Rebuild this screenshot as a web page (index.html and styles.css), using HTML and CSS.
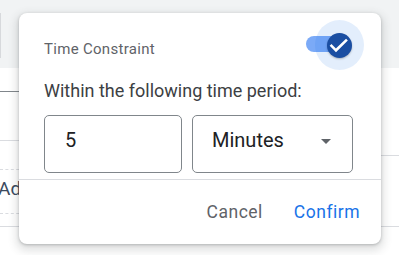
FILE: index.html
```html
<!DOCTYPE html>
<html>
<head>
<meta charset="utf-8">
<link rel="stylesheet" href="styles.css">
</head>
<body>
<div class="page">
  <div class="topband"><div class="edge"></div></div>
  <div class="line line-left line-dark l91"></div>
  <div class="line line-left l140"></div>
  <div class="line line-right l155"></div>
  <div class="line line-left dashed l169"></div>
  <div class="addtext">Add</div>
  <div class="line line-left dashed l213"></div>
  <div class="line line-full l226"></div>
</div>

<div class="dialog">
  <div class="header">
    <div class="title">Time Constraint</div>
    <div class="toggle">
      <div class="track"></div>
      <div class="halo"></div>
      <div class="thumb">
        <svg width="25" height="25" viewBox="0 0 25 25"><path d="M4.5 12.8 L9 17.3 L19 7.5" fill="none" stroke="#fff" stroke-width="2.6" stroke-linecap="square"/></svg>
      </div>
    </div>
  </div>
  <div class="prompt">Within the following time period:</div>
  <div class="fields">
    <div class="field num">5</div>
    <div class="field select"><span>Minutes</span><span class="arrow"></span></div>
  </div>
  <div class="divider"></div>
  <div class="footer">
    <span class="btn cancel">Cancel</span>
    <span class="btn confirm">Confirm</span>
  </div>
</div>
</body>
</html>
```

FILE: styles.css
```css
* { box-sizing: border-box; }
html, body { margin: 0; padding: 0; background: #fff; }
body { font-family: Roboto, "Noto Sans", sans-serif; width: 399px; height: 255px; overflow: hidden; position: relative; }

.page { width: 399px; height: 255px; }
.topband { height: 68px; background: #f1f3f4; padding-top: 13px; }
.edge { width: 1px; height: 45px; background: #d7d9dc; }

.line { height: 0; border-top: 1px solid #dadce0; }
.line-left { width: 30px; }
.line-right { width: 30px; margin-left: auto; }
.line-full { width: 100%; }
.line-dark { border-top-color: #80868b; }
.dashed { border-top-style: dashed; }
.l91 { margin-top: 23px; }
.l140 { margin-top: 48px; }
.l155 { margin-top: 14px; }
.l169 { margin-top: 13px; }
.addtext { margin-top: 8px; margin-left: -2px; height: 22px; line-height: 22px; font-size: 19px; color: #3b4a5e; white-space: nowrap; }
.l213 { margin-top: 13px; }
.l226 { margin-top: 12px; }

.dialog {
  position: absolute; left: 19px; top: 13px; width: 362px; height: 231px;
  background: #fff; border-radius: 8px;
  box-shadow: 0 1px 3px rgba(60,64,67,0.3), 0 4px 8px 3px rgba(60,64,67,0.15);
}
.header { display: flex; justify-content: space-between; align-items: flex-start; padding: 7px 17px 0 25px; height: 57px; }
.title { margin-top: 19px; font-size: 15px; letter-spacing: 0.3px; line-height: 20px; color: #5f6368; }
.toggle { position: relative; width: 58px; height: 50px; }
.track { position: absolute; left: 0; top: 16px; width: 40px; height: 16px; border-radius: 8px; background: #7baaf7; }
.halo { position: absolute; left: 9px; top: 0; width: 49px; height: 50px; border-radius: 50%; background: rgba(26,115,232,0.12); }
.thumb { position: absolute; left: 20.5px; top: 12.5px; width: 25px; height: 25px; border-radius: 50%; background: #1a4ea2; box-shadow: 0 1px 2px rgba(0,0,0,0.25); }
.thumb svg { display: block; }

.prompt { margin-top: 9px; padding-left: 25px; font-size: 18px; line-height: 24px; color: #3c4043; }
.fields { display: flex; gap: 10px; margin-top: 12px; padding-left: 25px; }
.field { height: 58px; border: 1px solid #80868b; border-radius: 5px; padding: 12px 0 0 20px; font-size: 20px; line-height: 24px; color: #202124; }
.num { width: 138px; }
.select { width: 161px; display: flex; justify-content: space-between; padding-left: 19px; padding-right: 21px; }
.arrow { margin-top: 11px; width: 0; height: 0; border-left: 5px solid transparent; border-right: 5px solid transparent; border-top: 5px solid #5f6368; }

.divider { margin-top: 6px; height: 1px; background: #dadce0; }
.footer { display: flex; justify-content: flex-end; gap: 31px; padding: 22px 21px 0 0; }
.btn { font-size: 17.5px; line-height: 20px; font-weight: 400; letter-spacing: 0.5px; }
.cancel { color: #5f6368; }
.confirm { color: #1a73e8; }
```
